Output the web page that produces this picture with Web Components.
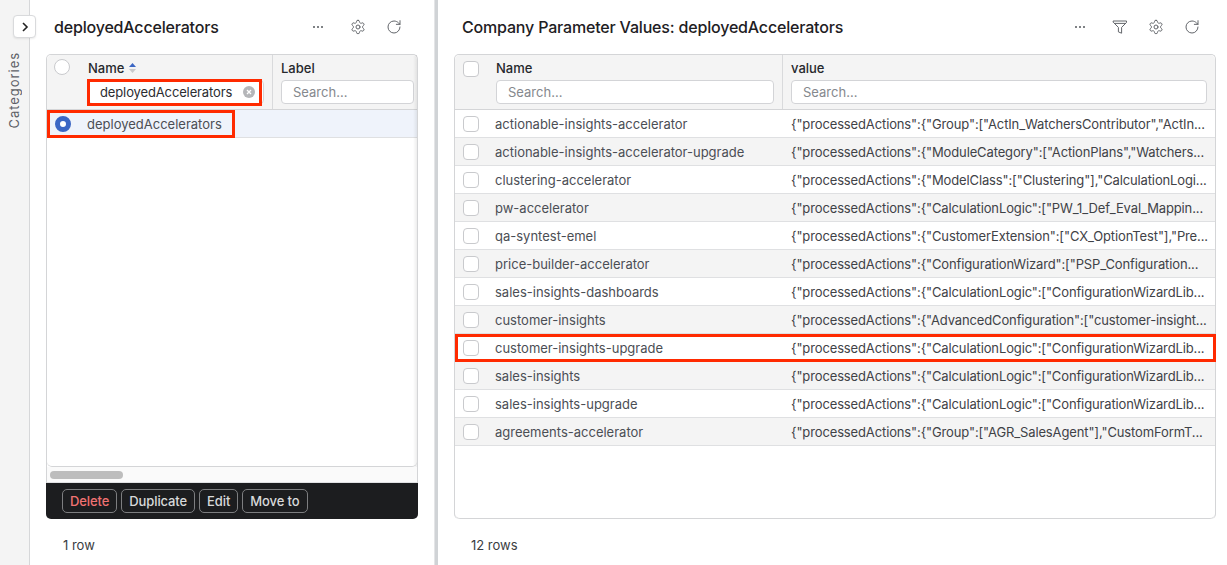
<!DOCTYPE html>
<html><head><meta charset="utf-8"><title>Parameters</title>
<style>
html,body{margin:0;height:565px;overflow:hidden;background:#fff;font:13px Inter,"Liberation Sans",sans-serif;color:#4b4e54}
</style></head><body>
<x-app>
  <x-rail slot="rail"></x-rail>
  <x-panel style="width:404px;--pr:16px" heading="deployedAccelerators" footer="1 row">
    <x-toolbar slot="actions" gear refresh></x-toolbar>
    <x-grid>
      <x-head-row slot="head" kind="radio">
        <x-head-cell width="226px" lead label="Name" sorted value="deployedAccelerators" marked></x-head-cell>
        <x-head-cell width="149px" label="Label"></x-head-cell>
      </x-head-row>
      <x-row selected kind="radio" name="deployedAccelerators" mark="188px"></x-row>
      <x-scrollbar slot="tail"></x-scrollbar>
      <x-actions slot="tail">
        <x-action danger>Delete</x-action><x-action>Duplicate</x-action><x-action>Edit</x-action><x-action>Move to</x-action>
      </x-actions>
      <x-edge slot="over"></x-edge>
    </x-grid>
  </x-panel>
  <x-splitter></x-splitter>
  <x-panel style="flex:1;--pr:11px" heading="Company Parameter Values: deployedAccelerators" footer="12 rows">
    <x-toolbar slot="actions" filter gear refresh></x-toolbar>
    <x-grid>
      <x-head-row slot="head" kind="check">
        <x-head-cell width="328px" lead label="Name"></x-head-cell>
        <x-head-cell width="432px" label="value" last></x-head-cell>
      </x-head-row>
      <x-row name="actionable-insights-accelerator" value='{"processedActions":{"Group":["ActIn_WatchersContributor","ActIn...'></x-row>
      <x-row odd name="actionable-insights-accelerator-upgrade" value='{"processedActions":{"ModuleCategory":["ActionPlans","Watchers...'></x-row>
      <x-row name="clustering-accelerator" value='{"processedActions":{"ModelClass":["Clustering"],"CalculationLogi...'></x-row>
      <x-row odd name="pw-accelerator" value='{"processedActions":{"CalculationLogic":["PW_1_Def_Eval_Mappin...'></x-row>
      <x-row name="qa-syntest-emel" value='{"processedActions":{"CustomerExtension":["CX_OptionTest"],"Pre...'></x-row>
      <x-row odd name="price-builder-accelerator" value='{"processedActions":{"ConfigurationWizard":["PSP_Configuration...'></x-row>
      <x-row name="sales-insights-dashboards" value='{"processedActions":{"CalculationLogic":["ConfigurationWizardLib...'></x-row>
      <x-row odd name="customer-insights" value='{"processedActions":{"AdvancedConfiguration":["customer-insight...'></x-row>
      <x-row name="customer-insights-upgrade" mark="761px" value='{"processedActions":{"CalculationLogic":["ConfigurationWizardLib...'></x-row>
      <x-row odd name="sales-insights" value='{"processedActions":{"CalculationLogic":["ConfigurationWizardLib...'></x-row>
      <x-row name="sales-insights-upgrade" value='{"processedActions":{"CalculationLogic":["ConfigurationWizardLib...'></x-row>
      <x-row odd name="agreements-accelerator" value='{"processedActions":{"Group":["AGR_SalesAgent"],"CustomFormT...'></x-row>
    </x-grid>
  </x-panel>
</x-app>
<script>
const esc=s=>String(s==null?'':s).replace(/&/g,'&amp;').replace(/"/g,'&quot;').replace(/</g,'&lt;');
function def(name,render){
  customElements.define(name,class extends HTMLElement{
    constructor(){super();this.attachShadow({mode:'open'})}
    connectedCallback(){this.shadowRoot.innerHTML=render(this)}
  });
}
const ICON='fill="none" stroke="#63666b" stroke-linecap="round" stroke-linejoin="round"';
const icons={
  dots:`<svg width="16" height="16" viewBox="0 0 16 16"><g fill="#55585d"><circle cx="4" cy="8" r="1"/><circle cx="8" cy="8" r="1"/><circle cx="12" cy="8" r="1"/></g></svg>`,
  gear:`<svg width="16" height="16" viewBox="0 0 24 24" ${ICON} stroke-width="1.5"><path d="M12.22 2h-.44a2 2 0 0 0-2 2v.18a2 2 0 0 1-1 1.73l-.43.25a2 2 0 0 1-2 0l-.15-.08a2 2 0 0 0-2.73.73l-.22.38a2 2 0 0 0 .73 2.73l.15.1a2 2 0 0 1 1 1.72v.51a2 2 0 0 1-1 1.74l-.15.09a2 2 0 0 0-.73 2.73l.22.38a2 2 0 0 0 2.73.73l.15-.08a2 2 0 0 1 2 0l.43.25a2 2 0 0 1 1 1.73V20a2 2 0 0 0 2 2h.44a2 2 0 0 0 2-2v-.18a2 2 0 0 1 1-1.73l.43-.25a2 2 0 0 1 2 0l.15.08a2 2 0 0 0 2.73-.73l.22-.39a2 2 0 0 0-.73-2.73l-.15-.08a2 2 0 0 1-1-1.74v-.5a2 2 0 0 1 1-1.74l.15-.09a2 2 0 0 0 .73-2.73l-.22-.38a2 2 0 0 0-2.73-.73l-.15.08a2 2 0 0 1-2 0l-.43-.25a2 2 0 0 1-1-1.73V4a2 2 0 0 0-2-2z"/><circle cx="12" cy="12" r="3"/></svg>`,
  refresh:`<svg width="16" height="16" viewBox="0 0 24 24" ${ICON} stroke-width="1.5"><path d="M21 12a9 9 0 1 1-9-9c2.52 0 4.93 1 6.74 2.74L21 8"/><path d="M21 2.5V8h-5.5"/></svg>`,
  filter:`<svg width="16" height="16" viewBox="0 0 16 16" ${ICON} stroke-width="1"><path d="M1.5 2h13v1.5L9.6 8.4v5.8l-3.2-1.3V8.4L1.5 3.5z"/><path d="M2.4 4.4h11.2"/></svg>`
};
def('x-app',()=>`<style>:host{display:flex;width:1227px;height:565px;overflow:hidden}</style><slot name="rail"></slot><slot></slot>`);
def('x-rail',()=>`<style>
:host{display:block;position:relative;width:29px;flex:none;background:#f4f4f4;border-right:1px solid #d6d7d9}
.label{writing-mode:vertical-rl;transform:rotate(180deg);position:absolute;left:6px;top:52px;font-size:13px;letter-spacing:.95px;color:#5d6066;line-height:16px}
button{position:absolute;left:13px;top:15px;width:23px;height:23px;padding:0;background:#fff;border:1px solid #d9dadc;border-radius:4px;display:flex;align-items:center;justify-content:center;box-shadow:0 1px 2px rgba(0,0,0,.08)}
</style><button aria-label="Expand"><svg width="12" height="12" viewBox="0 0 12 12" fill="none" stroke="#222" stroke-width="1.6"><path d="M4 2l4 4-4 4"/></svg></button><span class="label">Categories</span>`);
def('x-splitter',()=>`<style>:host{display:block;width:4px;flex:none;background:#d0d3d6;box-sizing:border-box;border-left:1px solid #e4e5e7}</style>`);
def('x-panel',h=>`<style>
:host{display:flex;flex-direction:column;flex:none;box-sizing:border-box;min-width:0;padding:0 var(--pr,16px) 0 16px;height:565px}
header{height:54px;flex:none;display:flex;align-items:center;justify-content:space-between;padding:0 16px 0 8px}
h1{margin:0;font-size:16px;font-weight:500;color:#1e2023;line-height:20px;letter-spacing:-.18px}
.body{height:465px;flex:none;display:flex}
footer{flex:1;padding:6px 0 0 17px;font-size:13px;line-height:16px;color:#3a3d42;display:flex;align-items:center}
::slotted(x-grid){flex:1;min-width:0}
</style><header><h1>${esc(h.getAttribute('heading'))}</h1><slot name="actions"></slot></header><div class="body"><slot></slot></div><footer>${esc(h.getAttribute('footer'))}</footer>`);
def('x-toolbar',h=>`<style>
:host{display:flex;align-items:center;gap:20px}
span{display:flex;width:16px;height:16px}
.d{margin-right:4px}
</style><span class="d">${icons.dots}</span>${h.hasAttribute('filter')?`<span>${icons.filter}</span>`:''}<span>${icons.gear}</span><span>${icons.refresh}</span>`);
def('x-grid',()=>`<style>
:host{display:flex;flex-direction:column;position:relative;box-sizing:border-box;border:1px solid #d4d5d7;border-bottom:none;border-radius:5px;min-width:0}
.rows{flex:1;min-height:0;overflow:visible;border-bottom:1px solid #d4d5d7;border-radius:0 0 5px 5px}
</style><slot name="head"></slot><div class="rows"><slot></slot></div><slot name="tail"></slot><slot name="over"></slot>`);
def('x-head-row',h=>{
  const radio=h.getAttribute('kind')==='radio';
  return `<style>
:host{display:flex;height:55px;flex:none;box-sizing:border-box;background:#f4f4f4;border-bottom:1px solid #d4d5d7;position:relative;border-radius:5px 5px 0 0}
.inner{display:flex;width:100%;overflow:hidden;border-radius:5px 5px 0 0}
.box{position:absolute;left:${radio?7:8}px;top:${radio?4:6}px;width:16px;height:16px;background:#fff;border:1px solid #c9cacd;box-sizing:border-box;border-radius:${radio?'50%':'4px'}}
</style><div class="inner"><slot></slot></div><span class="box"></span>`});
def('x-head-cell',h=>{
  const v=h.getAttribute('value'),lead=h.hasAttribute('lead'),last=h.hasAttribute('last');
  return `<style>
:host{display:block;flex:none;box-sizing:border-box;width:${h.getAttribute('width')};padding:5px 8px 0 ${lead?'41px':'8px'};border-right:${last||h.getAttribute('label')==='Label'?'none':'1px solid #d9dadc'};position:relative}
.l{display:flex;align-items:center;gap:5px;font-size:13px;font-weight:500;line-height:16px;color:#26282c;height:16px}
.in{margin-top:4px;height:24px;box-sizing:border-box;background:#fff;border:1px solid #d3d4d7;border-radius:4px;padding:0 ${v?'8px':'11px'} 0 11px;display:flex;align-items:center;justify-content:space-between;font-size:13px;color:#85888d;white-space:nowrap;overflow:hidden}
.in.v{color:#2b2d31;letter-spacing:-.13px}
.mark{position:absolute;left:40px;top:24px;width:175px;height:27px;box-sizing:border-box;border:3px solid #ff2a00;pointer-events:none}
svg{flex:none}
</style><div class="l">${esc(h.getAttribute('label'))}${h.hasAttribute('sorted')?`<svg width="7" height="12" viewBox="0 0 7 12"><path d="M3.5 1L7 5H0z" fill="#3b66c4"/><path d="M3.5 11L0 7h7z" fill="#c8c9cc"/></svg>`:''}</div>
<div class="in ${v?'v':''}">${v?`<span>${esc(v)}</span><svg width="12" height="12" viewBox="0 0 12 12"><circle cx="6" cy="6" r="6" fill="#b5b6b9"/><path d="M4 4l4 4M8 4l-4 4" stroke="#fff" stroke-width="1.3"/></svg>`:'<span>Search...</span>'}</div>${h.hasAttribute('marked')?'<span class="mark"></span>':''}`});
def('x-row',h=>{
  const sel=h.hasAttribute('selected'),radio=h.getAttribute('kind')==='radio',m=h.getAttribute('mark');
  return `<style>
:host{display:flex;align-items:center;position:relative;height:28px;box-sizing:border-box;border-bottom:1px solid #dfe0e2;background:${sel?'#eff3fb':h.hasAttribute('odd')?'#f4f4f4':'#fff'};font-size:13px;color:#4b4e54;white-space:nowrap}
.box{flex:none;margin-left:8px;width:16px;height:16px;box-sizing:border-box;background:#fff;border:1px solid #c9cacd;border-radius:4px}
.box.r{border-radius:50%;border:5px solid #3b66c4}
.n{flex:none;width:296px;margin-left:16px}
.v{flex:1;overflow:hidden;color:#3f4247;letter-spacing:-.13px}
.mark{position:absolute;left:0;top:0;bottom:-1px;width:${m};box-sizing:border-box;border:3px solid #ff2a00;pointer-events:none}
</style><span class="box ${radio?'r':''}"></span><span class="n">${esc(h.getAttribute('name'))}</span><span class="v">${esc(h.getAttribute('value'))}</span>${m?'<span class="mark"></span>':''}`});
def('x-scrollbar',()=>`<style>
:host{display:block;flex:none;height:16px;box-sizing:border-box;background:#fafafa;border-bottom:1px solid #e0e1e3;padding:4px 0 0 3px}
i{display:block;width:73px;height:8px;border-radius:4px;background:#bdbdbd}
</style><i></i>`);
def('x-actions',()=>`<style>
:host{display:flex;flex:none;align-items:center;gap:4px;height:36px;box-sizing:border-box;margin:0 -1px;padding:0 0 0 16px;background:#1c1d1f;border-radius:0 0 5px 5px}
</style><slot></slot>`);
def('x-action',h=>`<style>
:host{display:block;height:24px;box-sizing:border-box;padding:0 7px;border:1px solid #7d7e80;border-radius:5px;font-size:13px;font-weight:500;line-height:22px;letter-spacing:-.1px;color:${h.hasAttribute('danger')?'#f07272':'#d8d9da'}}
</style><slot></slot>`);
def('x-edge',()=>`<style>
:host{display:block;position:absolute;right:0;top:0;bottom:52px;width:4px;background:linear-gradient(to right,rgba(0,0,0,0),rgba(0,0,0,.07));pointer-events:none}
</style>`);
</script>
</body></html>
